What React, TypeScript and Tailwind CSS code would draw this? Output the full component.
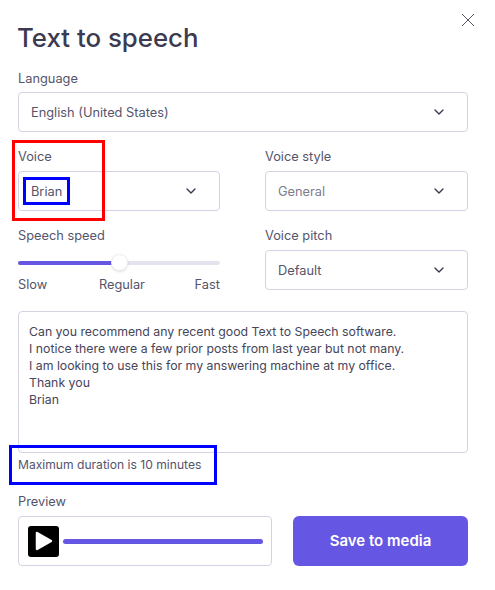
import { ChevronDown } from "lucide-react";

function Select({ value, muted }: { value: string; muted?: boolean }) {
  return (
    <div className="flex h-10 items-center justify-between rounded border border-[#d5d3e3] bg-white pl-3 pr-[20px]">
      <span className={muted ? "pt-[2px] text-[12.8px] text-[#7d7c8c]" : "pt-[2px] text-[12.8px] text-[#55546a]"}>{value}</span>
      <ChevronDown size={16} strokeWidth={2} className="text-[#3a394d]" />
    </div>
  );
}

function Label({ children }: { children: string }) {
  return <div className="h-[16px] pt-px leading-[16px]">{children}</div>;
}

export default function App() {
  return (
    <div className="relative h-[590px] w-[495px] overflow-hidden bg-white font-['Inter',sans-serif] text-[12.8px] text-[#55546a]">
      <button className="absolute left-[461px] top-[13px] text-[#55546a]">
        <svg width="14" height="14" viewBox="0 0 14 14" fill="none" stroke="currentColor" strokeWidth="1">
          <path d="M1 1 L13 13 M13 1 L1 13" />
        </svg>
      </button>

      <div className="flex w-[468px] flex-col pl-[18px]">
        <h1 className="-ml-px mt-[20px] h-[36px] text-[25.8px] font-medium leading-[36px] text-[#3b3a50]">Text to speech</h1>

        <div className="mt-[14px]"><Label>Language</Label></div>
        <div className="mt-[6px]">
          <Select value="English (United States)" />
        </div>

        <div className="mt-[16px] grid grid-cols-[202px_203px] gap-x-[45px]">
          <div>
            <Label>Voice</Label>
            <div className="mt-[7px]"><Select value="Brian" /></div>
          </div>
          <div>
            <Label>Voice style</Label>
            <div className="mt-[7px]"><Select value="General" muted /></div>
          </div>
          <div className="mt-[16px]">
            <Label>Speech speed</Label>
            <div className="relative mt-[18px] h-[4px] rounded-full bg-[#e4e3ee]">
              <div className="h-[4px] w-[95px] rounded-full bg-[#6656e4]" />
              <div className="absolute left-[93px] top-[-7px] h-[17px] w-[17px] rounded-full border border-[#eeeef4] bg-white shadow-sm" />
            </div>
            <div className="mt-[11px] flex h-[16px] justify-between pt-px leading-[16px]">
              <span>Slow</span>
              <span className="pl-[2px]">Regular</span>
              <span>Fast</span>
            </div>
          </div>
          <div className="mt-[16px]">
            <Label>Voice pitch</Label>
            <div className="mt-[7px]"><Select value="Default" /></div>
          </div>
        </div>

        <div className="mt-[19px] h-[142px] rounded border border-[#d5d3e3] bg-white px-[10px] pt-[11px] text-[12.3px] leading-[17px] text-[#46455a]">
          <p>Can you recommend any recent good Text to Speech software.</p>
          <p>I notice there were a few prior posts from last year but not many.</p>
          <p>I am looking to use this for my answering machine at my office.</p>
          <p>Thank you</p>
          <p>Brian</p>
        </div>

        <div className="mt-[4px] h-[16px] text-[12.1px] leading-[16px]">Maximum duration is 10 minutes</div>

        <div className="mt-[20px]"><Label>Preview</Label></div>
        <div className="mt-[7px] flex gap-[21px]">
          <div className="flex h-[50px] w-[254px] items-center gap-[4px] rounded border border-[#d5d3e3] bg-white pl-[9px]">
            <div className="flex h-[31px] w-[31px] items-center justify-center rounded-[3px] bg-black">
              <svg width="20" height="22" viewBox="0 0 20 22">
                <path d="M3 3 L17 11 L3 19 Z" fill="#fff" stroke="#fff" strokeWidth="2.5" strokeLinejoin="round" />
              </svg>
            </div>
            <div className="h-[5px] w-[200px] rounded-full bg-[#6656e4]" />
          </div>
          <button className="h-[50px] w-[175px] rounded-md bg-[#6656e4] text-[15px] font-semibold text-white">Save to media</button>
        </div>
      </div>

      {/* annotation boxes drawn over the screenshot */}
      <div className="absolute left-[12px] top-[140px] h-[81px] w-[93px] border-[3px] border-[#ff0000]" />
      <div className="absolute left-[23px] top-[177px] h-[28px] w-[47px] border-[3px] border-[#0000ff]" />
      <div className="absolute left-[9px] top-[445px] h-[40px] w-[208px] border-[3px] border-[#0000ff]" />
    </div>
  );
}
